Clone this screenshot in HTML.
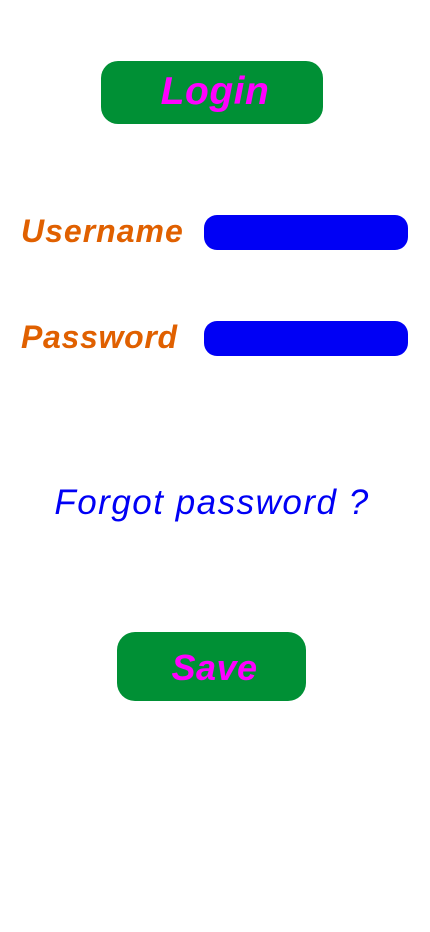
<!DOCTYPE html>
<html><head><meta charset="utf-8"><style>
html,body{margin:0;padding:0;width:430px;height:932px;background:#fff;overflow:hidden;position:relative;font-family:"Liberation Sans",sans-serif}
.a{position:absolute}
.btn{background:#009035}
.t{position:absolute;line-height:1;white-space:nowrap;font-style:italic}
.in{background:#0000f5;border-radius:13px}
</style></head><body>
<div class="a btn" style="left:101px;top:61px;width:222px;height:63px;border-radius:17px"></div>
<div class="t" style="left:101px;width:228px;text-align:center;top:72px;font-size:39px;font-weight:bold;color:#ff00ff;letter-spacing:0.5px">Login</div>
<div class="t" style="left:21px;top:215px;font-size:32px;font-weight:bold;color:#e06000;letter-spacing:1px">Username</div>
<div class="a in" style="left:204px;top:215px;width:204px;height:35px"></div>
<div class="t" style="left:21px;top:321px;font-size:32px;font-weight:bold;color:#e06000;letter-spacing:0.7px">Password</div>
<div class="a in" style="left:204px;top:321px;width:204px;height:35px"></div>
<div class="t" style="left:0;width:424px;text-align:center;top:485px;font-size:35px;color:#0000f5;letter-spacing:1.5px">Forgot password ?</div>
<div class="a btn" style="left:117px;top:632px;width:189px;height:69px;border-radius:18px"></div>
<div class="t" style="left:117px;width:195px;text-align:center;top:650px;font-size:36px;font-weight:bold;color:#ff00ff;letter-spacing:0.5px">Save</div>
</body></html>
